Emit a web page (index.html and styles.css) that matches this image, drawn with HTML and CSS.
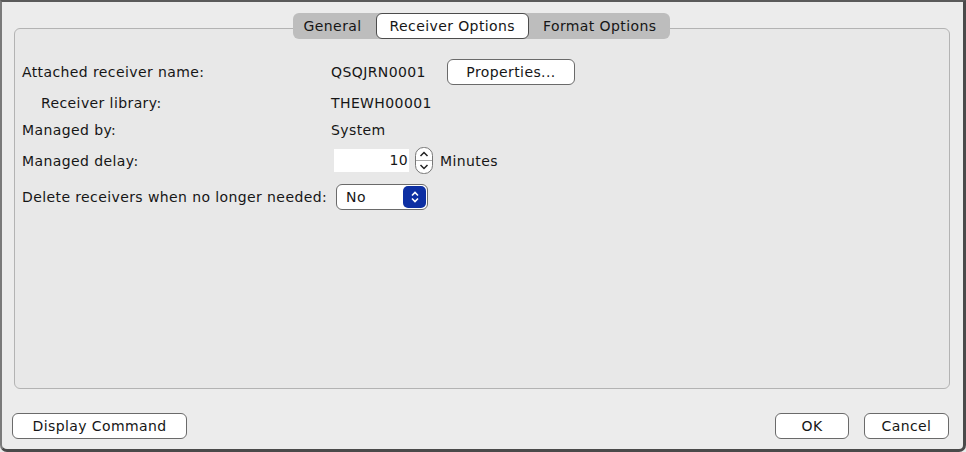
FILE: index.html
```html
<!DOCTYPE html>
<html lang="en">
<head>
    <meta charset="UTF-8">
    <title>Journal Properties</title>
    <link rel="stylesheet" href="styles.css">
</head>
<body>

<div class="window">
    <div class="tabs">
        <span class="tab">General</span>
        <span class="tab active">Receiver Options</span>
        <span class="tab">Format Options</span>
    </div>

    <div class="panel">
        <div class="row row-first">
            <span class="label">Attached receiver name:</span>
            <span class="value">QSQJRN0001</span>
            <button class="btn btn-props">Properties...</button>
        </div>
        <div class="row row-lib">
            <span class="label indent">Receiver library:</span>
            <span class="value">THEWH00001</span>
        </div>
        <div class="row row-by">
            <span class="label">Managed by:</span>
            <span class="value">System</span>
        </div>
        <div class="row row-delay">
            <span class="label">Managed delay:</span>
            <span class="number">10</span>
            <span class="spinner">
                <svg width="18" height="27" viewBox="0 0 18 27">
                    <rect x="0.5" y="0.5" width="17" height="26" rx="8" fill="#fff" stroke="#777"/>
                    <line x1="1" y1="13.5" x2="17" y2="13.5" stroke="#aaa"/>
                    <path d="M5.5 9 L9 5.5 L12.5 9" fill="none" stroke="#222" stroke-width="1.5"/>
                    <path d="M5.5 18 L9 21.5 L12.5 18" fill="none" stroke="#222" stroke-width="1.5"/>
                </svg>
            </span>
            <span class="unit">Minutes</span>
        </div>
        <div class="row row-delete">
            <span class="label label-auto">Delete receivers when no longer needed:</span>
            <span class="select">
                <span class="select-text">No</span>
                <span class="select-arrow">
                    <svg width="12" height="16" viewBox="0 0 12 16">
                        <path d="M3 6.5 L6 3.5 L9 6.5" fill="none" stroke="#fff" stroke-width="1.6"/>
                        <path d="M3 9.5 L6 12.5 L9 9.5" fill="none" stroke="#fff" stroke-width="1.6"/>
                    </svg>
                </span>
            </span>
        </div>
    </div>

    <div class="footer">
        <button class="btn btn-cmd">Display Command</button>
        <div class="footer-right">
            <button class="btn btn-ok">OK</button>
            <button class="btn btn-cancel">Cancel</button>
        </div>
    </div>
</div>

</body>
</html>
```

FILE: styles.css
```css
html, body {
    margin: 0;
    padding: 0;
}
body {
    font-family: "DejaVu Sans", "Liberation Sans", sans-serif;
    font-size: 14px;
    letter-spacing: 0.4px;
    color: #161616;
    background: #ececec;
}
.window {
    width: 966px;
    height: 452px;
    box-sizing: border-box;
    background: #ececec;
    border-top: 2px solid #5a5a5a;
    border-left: 2px solid #7a7a7a;
    border-right: 3px solid #4a4a4a;
    border-bottom: 3px solid #4a4a4a;
    border-radius: 0 0 7px 7px;
    display: flex;
    flex-direction: column;
}
.tabs {
    position: relative;
    z-index: 1;
    align-self: center;
    display: flex;
    align-items: center;
    margin-top: 11px;
    margin-left: -2px;
    height: 26px;
    background: #bdbdbd;
    border-radius: 6px;
    padding: 0 0 0 11px;
}
.tab {
    padding: 0 14px 0 0;
    line-height: 25px;
}
.tab.active {
    background: #fff;
    border: 1px solid #4c4c4c;
    border-radius: 6px;
    height: 24px;
    line-height: 24px;
    padding: 0 13px;
    margin: 0 14px 0 0;
}
.panel {
    margin: -11px 13px 0 12px;
    height: 361px;
    box-sizing: border-box;
    background: #e8e8e8;
    border: 1px solid #b3b3b3;
    border-radius: 6px;
    padding: 30px 0 0 7px;
}
.row {
    display: flex;
    align-items: center;
}
.label {
    width: 309px;
    flex: none;
}
.label.indent {
    padding-left: 19px;
    width: 290px;
}
.label-auto {
    width: auto;
    margin-right: 9px;
}
.row-first { height: 26px; }
.row-lib { height: 20px; margin-top: 8px; }
.row-by { height: 20px; margin-top: 7px; }
.row-delay { height: 27px; margin-top: 7px; }
.row-delete { height: 27px; margin-top: 9px; }
.value {
    width: 116px;
}
.btn {
    font-family: inherit;
    font-size: 14px;
    letter-spacing: 0.4px;
    color: #161616;
    background: #fff;
    border: 1px solid #6a6a6a;
    border-radius: 6px;
    height: 26px;
    padding: 0;
    cursor: pointer;
}
.btn-props {
    width: 128px;
}
.number {
    margin-left: 3px;
    width: 75px;
    height: 23px;
    line-height: 23px;
    background: #fff;
    text-align: right;
    box-sizing: border-box;
    padding-right: 1px;
}
.spinner {
    display: flex;
    margin-left: 6px;
}
.unit {
    margin-left: 7px;
}
.select {
    display: flex;
    align-items: center;
    justify-content: space-between;
    width: 92px;
    height: 26px;
    box-sizing: border-box;
    background: #fff;
    border: 1px solid #6a6a6a;
    border-radius: 6px;
    padding: 0 1px 0 9px;
}
.select-arrow {
    display: flex;
    align-items: center;
    justify-content: center;
    width: 23px;
    height: 22px;
    background: #0d2fa3;
    border-radius: 5px;
}
.footer {
    display: flex;
    justify-content: space-between;
    margin: 24px 14px 0 10px;
}
.footer-right {
    display: flex;
    gap: 15px;
}
.btn-cmd { width: 175px; }
.btn-ok { width: 74px; }
.btn-cancel { width: 85px; }
```
